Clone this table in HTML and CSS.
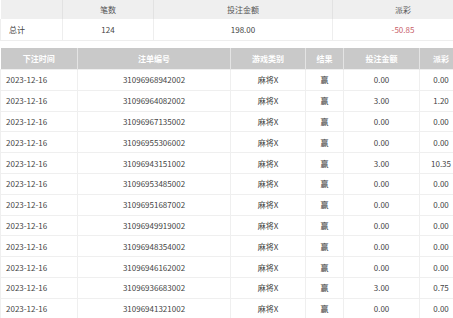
FILE: index.html
```html
<!DOCTYPE html>
<html lang="zh-CN">
<head>
    <meta charset="UTF-8">
    <title>投注记录</title>
    <link rel="stylesheet" href="styles.css">
</head>
<body>
    <div class="page">
        <table class="summary">
            <colgroup>
                <col style="width:62px">
                <col style="width:91px">
                <col style="width:179px">
                <col>
            </colgroup>
            <thead>
                <tr>
                    <th></th>
                    <th>笔数</th>
                    <th>投注金额</th>
                    <th>派彩</th>
                </tr>
            </thead>
            <tbody>
                <tr>
                    <td class="label">总计</td>
                    <td>124</td>
                    <td>198.00</td>
                    <td class="loss">-50.85</td>
                </tr>
            </tbody>
        </table>

        <table class="records">
            <colgroup>
                <col style="width:77px">
                <col style="width:153px">
                <col style="width:75px">
                <col style="width:38px">
                <col style="width:76px">
                <col>
            </colgroup>
            <thead>
                <tr>
                    <th>下注时间</th>
                    <th>注单编号</th>
                    <th>游戏类别</th>
                    <th>结果</th>
                    <th>投注金额</th>
                    <th>派彩</th>
                </tr>
            </thead>
            <tbody>
                <tr><td class="date">2023-12-16</td><td>31096968942002</td><td>麻将X</td><td>赢</td><td>0.00</td><td>0.00</td></tr>
                <tr><td class="date">2023-12-16</td><td>31096964082002</td><td>麻将X</td><td>赢</td><td>3.00</td><td>1.20</td></tr>
                <tr><td class="date">2023-12-16</td><td>31096967135002</td><td>麻将X</td><td>赢</td><td>0.00</td><td>0.00</td></tr>
                <tr><td class="date">2023-12-16</td><td>31096955306002</td><td>麻将X</td><td>赢</td><td>0.00</td><td>0.00</td></tr>
                <tr><td class="date">2023-12-16</td><td>31096943151002</td><td>麻将X</td><td>赢</td><td>3.00</td><td>10.35</td></tr>
                <tr><td class="date">2023-12-16</td><td>31096953485002</td><td>麻将X</td><td>赢</td><td>0.00</td><td>0.00</td></tr>
                <tr><td class="date">2023-12-16</td><td>31096951687002</td><td>麻将X</td><td>赢</td><td>0.00</td><td>0.00</td></tr>
                <tr><td class="date">2023-12-16</td><td>31096949919002</td><td>麻将X</td><td>赢</td><td>0.00</td><td>0.00</td></tr>
                <tr><td class="date">2023-12-16</td><td>31096948354002</td><td>麻将X</td><td>赢</td><td>0.00</td><td>0.00</td></tr>
                <tr><td class="date">2023-12-16</td><td>31096946162002</td><td>麻将X</td><td>赢</td><td>0.00</td><td>0.00</td></tr>
                <tr><td class="date">2023-12-16</td><td>31096936683002</td><td>麻将X</td><td>赢</td><td>3.00</td><td>0.75</td></tr>
                <tr><td class="date">2023-12-16</td><td>31096941321002</td><td>麻将X</td><td>赢</td><td>0.00</td><td>0.00</td></tr>
            </tbody>
        </table>
    </div>
</body>
</html>
```

FILE: styles.css
```css
* {
    margin: 0;
    padding: 0;
    box-sizing: border-box;
}

body {
    background: #fff;
    color: #444;
    font-family: 'Noto Sans CJK SC', 'Noto Sans', sans-serif;
    font-size: 8px;
    overflow: hidden;
}

.page {
    width: 474px;
}

table {
    border-collapse: collapse;
    table-layout: fixed;
}

th,
td {
    text-align: center;
    white-space: nowrap;
    overflow: hidden;
}

/* summary block */
.summary {
    width: 474px;
}

.summary th {
    height: 19px;
    background: #efefef;
    color: #555;
    font-weight: normal;
    border-right: 1px solid #e2e2e2;
}

.summary td {
    height: 21px;
    border: 1px solid #eee;
    border-top: none;
    color: #444;
}

.summary .label {
    text-align: left;
    padding-left: 8px;
}

.summary .loss {
    color: #c8606a;
}

/* records table */
.records {
    width: 463px;
    margin-top: 7px;
}

.records th {
    height: 22px;
    background: #c9c9c9;
    color: #fff;
    font-weight: bold;
    border-right: 1px solid #e4e4e4;
}

.records td {
    height: 20.8px;
    border: 1px solid #efefef;
    color: #444;
}

.records .date {
    text-align: left;
    padding-left: 5px;
}
```
